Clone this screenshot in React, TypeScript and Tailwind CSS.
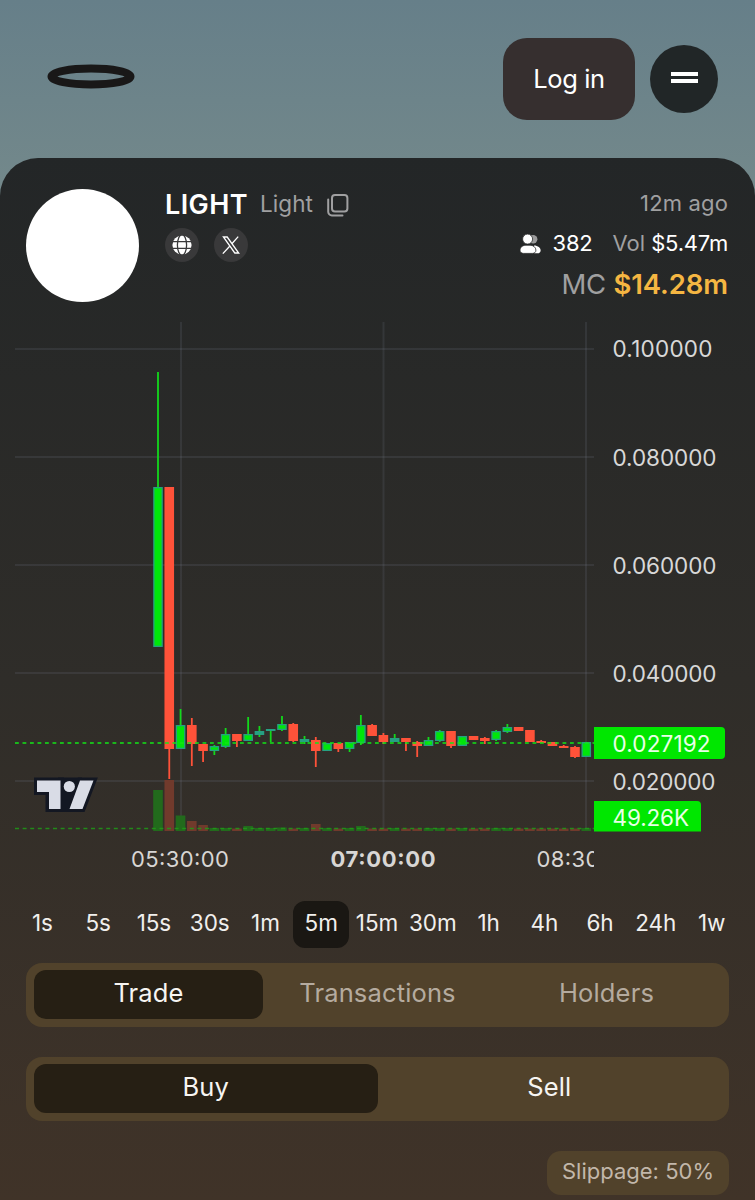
import clsx from 'clsx';
import { useState } from 'react';

type Candle = {
  open: number;
  close: number;
  high: number;
  low: number;
  up: boolean;
  vol: number;
};

// [up, body top, body bottom, wick top, wick bottom, volume height]
const rows: [number, number, number, number, number, number][] = [
  [1, 487, 647, 372, 647, 41],
  [0, 487, 749, 487, 779, 51],
  [1, 725, 749, 709, 749, 15.5],
  [0, 725, 744, 718, 766, 10],
  [0, 744, 751, 744, 762, 6],
  [1, 746, 751, 745, 755, 3],
  [1, 734, 747, 728, 748, 3],
  [0, 734, 741, 734, 747, 2.5],
  [1, 734, 741, 717, 741, 5],
  [1, 731, 735, 726, 737, 3],
  [1, 729, 731, 729, 742, 3],
  [1, 724, 730, 716, 731, 3.5],
  [0, 724, 741, 723, 742, 2.5],
  [1, 739, 742, 736, 744, 3],
  [0, 740, 751, 737, 767, 7],
  [1, 743, 751, 743, 751, 3],
  [0, 743, 749, 743, 752, 2.5],
  [1, 742, 749, 742, 752, 3],
  [1, 725, 743, 715, 745, 5],
  [0, 725, 736, 724, 736, 2.5],
  [0, 735, 742, 733, 744, 2.5],
  [1, 738, 742, 734, 742, 3],
  [0, 738, 742, 738, 751, 2.5],
  [0, 742, 746, 741, 757, 2.5],
  [1, 740, 746, 737, 746, 3],
  [1, 731, 741, 730, 742, 3],
  [0, 731, 746, 731, 748, 2.5],
  [1, 736, 746, 736, 746, 3],
  [0, 736, 740, 736, 740, 2.5],
  [0, 738, 741, 737, 744, 2.5],
  [1, 731, 740, 730, 741, 3],
  [1, 727, 732, 724, 733, 3],
  [0, 727, 731, 727, 731, 2.5],
  [0, 730, 742, 730, 742, 2.5],
  [0, 741, 743, 740, 743, 2.5],
  [0, 742, 746, 742, 746, 2.5],
  [0, 746, 748, 745, 748, 2.5],
  [0, 747, 757, 746, 758, 2.5],
  [1, 742, 757, 742, 757, 3],
];

const candles: Candle[] = rows.map(([up, open, close, high, low, vol]) => ({
  up: up === 1,
  open,
  close,
  high,
  low,
  vol,
}));

const prices = [
  { y: 349, label: '0.100000', width: 100 },
  { y: 457.5, label: '0.080000', width: 104 },
  { y: 565.5, label: '0.060000', width: 104 },
  { y: 673.5, label: '0.040000', width: 104 },
  { y: 781.5, label: '0.020000', width: 103 },
];

const intervals = ['1s', '5s', '15s', '30s', '1m', '5m', '15m', '30m', '1h', '4h', '6h', '24h', '1w'];

function CopyIcon() {
  return (
    <svg width="22" height="24" viewBox="0 0 22 24" fill="none" stroke="#a0a0a1" strokeWidth="2">
      <rect x="5" y="2" width="15.4" height="16.4" rx="3" />
      <path d="M1.2 6.500v12.3a3.7 3.7 0 0 0 3.7 3.7h10.6" strokeLinecap="round" />
    </svg>
  );
}

function GlobeIcon() {
  return (
    <svg width="20" height="20" viewBox="0 0 20 20">
      <circle cx="10" cy="10" r="9.6" fill="#fff" />
      <g fill="none" stroke="#39393a" strokeWidth="1.3">
        <ellipse cx="10" cy="10" rx="4.6" ry="10.4" />
        <path d="M0 6.6h20M0 13.3h20" />
      </g>
    </svg>
  );
}

function XIcon() {
  return (
    <svg width="18" height="18" viewBox="0 0 18 18" fill="none" stroke="#fff" strokeWidth="1.3">
      <path d="M1.4 1h3.8l11.5 16h-3.9z" />
      <path d="M16.2.6 9.9 7.7M7.7 10.2.8 17.6" />
    </svg>
  );
}

function UsersIcon() {
  return (
    <svg width="21" height="20" viewBox="0 0 21 20" className="mt-0.5">
      <circle cx="13.2" cy="5.2" r="4.2" fill="#9b9b9b" />
      <path d="M14 11.4c4 0 6.6 2.400 6.600 5 0 1.900-1.200 2.800-3 2.800h-3.600z" fill="#fff" />
      <circle cx="7.6" cy="5.1" r="5" fill="#fff" stroke="#272828" strokeWidth=".8" />
      <path
        d="M6 11.200h4c3.400 0 5.900 2.200 5.900 4.900 0 2.100-1.300 3.300-3.500 3.300H3.500C1.300 19.400 0 18.200 0 16.100c0-2.700 2.600-4.900 6-4.900z"
        fill="#fff"
        stroke="#272828"
        strokeWidth=".8"
      />
    </svg>
  );
}

function Chart() {
  return (
    <svg width="755" height="599" viewBox="0 302 755 599" className="block" fontFamily="Inter, sans-serif">
      <defs>
        <clipPath id="plot">
          <rect x="0" y="302" width="594" height="599" />
        </clipPath>
      </defs>

      <g fill="#8a90a0" fillOpacity=".14">
        {prices.map((p) => (
          <rect key={p.label} x="15" y={Math.floor(p.y) - 1} width="579" height="2" />
        ))}
        {[180, 382.5, 585].map((x) => (
          <rect key={x} x={x} y="322" width="2" height="509" />
        ))}
      </g>

      {candles.map((c, i) => {
        const x = 158 + i * 11.27;
        return (
          <rect
            key={i}
            x={x - 4.8}
            y={831 - c.vol}
            width="9.6"
            height={c.vol}
            fill={c.up ? '#226a1c' : '#713a2c'}
          />
        );
      })}
      <path d="M15 828.6h579" stroke="#209b18" strokeWidth="1.5" strokeDasharray="4 3.6" opacity=".85" />

      <g strokeLinejoin="miter">
        <path
          d="M37 780.5h24V809H48.500V792H37zM80 780.5h13.5L82.500 809H69.500z"
          fill="#131722"
          stroke="#131722"
          strokeWidth="6"
        />
        <path d="M58 777.5h24V812H58z" fill="#131722" />
        <path d="M37 780.5h23.5V809H49V792H37zM80 780.5h13.5L82.500 809H69.500z" fill="#d9dce6" />
        <circle cx="69.3" cy="786.5" r="5.6" fill="#d9dce6" />
      </g>

      {candles.map((c, i) => {
        const x = 158 + i * 11.27;
        const h = c.close - c.open;
        return (
          <g key={i}>
            <rect x={x - 0.9} y={c.high} width="1.8" height={c.low - c.high} fill={c.up ? '#12d81b' : '#ff5239'} />
            <rect x={x - 4.8} y={c.open} width="9.6" height={h} fill={c.up ? '#26a082' : '#ff5239'} />
            {c.up && h > 4 && <rect x={x - 3.5} y={c.open + 1.3} width="7" height={h - 2.6} fill="#00e60a" />}
          </g>
        );
      })}
      <path d="M15 743h579" stroke="#12e617" strokeWidth="1.7" strokeDasharray="3.8 3.7" />

      <g fill="#d8d8d8" fontSize="22.5">
        {prices.map((p) => (
          <text key={p.label} x="612.5" y={p.y + 8} textLength={p.width}>
            {p.label}
          </text>
        ))}
      </g>

      <path d="M594 727h127a4 4 0 0 1 4 4v24a4 4 0 0 1-4 4H594z" fill="#00e700" />
      <path d="M594 801h103a4 4 0 0 1 4 4v26.500H594z" fill="#00e700" />
      <g fill="#e9ffe6" fontSize="22.5">
        <text x="612.5" y="751.5" textLength="98">
          0.027192
        </text>
        <text x="612.5" y="825.5" textLength="76.5">
          49.26K
        </text>
      </g>

      <g fill="#d8d6d4" fontSize="22" clipPath="url(#plot)">
        <text x="131" y="867" textLength="98">
          05:30:00
        </text>
        <text x="330.5" y="867" textLength="105" fontWeight="700">
          07:00:00
        </text>
        <text x="536.5" y="867" textLength="98">
          08:30:00
        </text>
      </g>
    </svg>
  );
}

type TabsProps = {
  items: string[];
  muted?: boolean;
};

function Tabs({ items, muted }: TabsProps) {
  const [active, setActive] = useState(items[0]);

  return (
    <div className="mx-[26px] flex h-16 rounded-2xl bg-[#51422b] px-2 pt-[7px] pb-2">
      {items.map((item) => (
        <button
          key={item}
          onClick={() => setActive(item)}
          className={clsx(
            'flex-1 rounded-xl pb-[3px] text-[25.5px] leading-none tracking-[0.15px]',
            item === active && 'bg-[#261f14] text-[#f7f5f2]',
            item !== active && (muted ? 'text-[#b5ab9f]' : 'text-[#f7f5f2]')
          )}
        >
          {item}
        </button>
      ))}
    </div>
  );
}

export default function App() {
  const [interval, setInterval] = useState('5m');

  return (
    <div className="h-[1200px] w-[755px] overflow-hidden bg-linear-to-b from-[#667f89] to-[#74898b] to-[200px] font-['Inter',sans-serif]">
      <header className="flex h-[158px] items-start justify-between pt-[38px] pr-[37px] pl-[47px]">
        <svg width="88" height="25" viewBox="0 0 88 25" className="mt-[26px]">
          <ellipse cx="44" cy="12.5" rx="39.5" ry="8" fill="none" stroke="#191818" strokeWidth="8" />
        </svg>
        <div className="flex items-center gap-[15px]">
          <button className="h-[82px] w-[132px] rounded-3xl bg-[#362f2f] text-[25.5px] tracking-[-0.4px] text-white">
            Log in
          </button>
          <button className="flex size-[68px] flex-col items-center justify-center gap-[3px] rounded-full bg-[#212627] pb-[3px]">
            <span className="h-1 w-[27px] bg-white" />
            <span className="h-1 w-[27px] bg-white" />
          </button>
        </div>
      </header>

      <main className="h-[1042px] rounded-t-[38px] bg-linear-to-b from-[#232627] via-[#2f2d29] to-[#403328]">
        <section className="flex h-36 pt-[31px] pr-[27px] pl-[26px]">
          <div className="size-[113px] rounded-full bg-white" />
          <div className="ml-[26px]">
            <div className="flex h-[30px] items-center">
              <h1 className="text-[27px] leading-none font-semibold tracking-[0.4px] text-white">LIGHT</h1>
              <span className="ml-3 text-[22.5px] leading-none tracking-[0.1px] text-[#a0a0a1]">Light</span>
              <span className="mt-px ml-3.5">
                <CopyIcon />
              </span>
            </div>
            <div className="mt-[9px] flex gap-[15px]">
              <span className="flex size-[34px] items-center justify-center rounded-full bg-[#39393a]">
                <GlobeIcon />
              </span>
              <span className="flex size-[34px] items-center justify-center rounded-full bg-[#39393a]">
                <XIcon />
              </span>
            </div>
          </div>
          <div className="ml-auto flex flex-col items-end text-[22px] leading-none">
            <div className="flex h-[27px] items-center tracking-[0.15px] text-[#a0a0a1]">12m ago</div>
            <div className="mt-[13px] flex h-[28px] items-center text-white">
              <UsersIcon />
              <span className="ml-3 tracking-[-0.2px]">382</span>
              <span className="ml-5 text-[#a0a0a1]">Vol</span>
              <span className="ml-1.5 tracking-[-0.2px]">$5.47m</span>
            </div>
            <div className="mt-3 flex h-[32px] items-center text-[27.5px]">
              <span className="tracking-[-0.5px] text-[#a0a0a1]">MC</span>
              <span className="ml-2 font-semibold tracking-[-0.1px] text-[#f5b642]">$14.28m</span>
            </div>
          </div>
        </section>

        <Chart />

        <div className="flex h-[47px] pr-[15.5px] pl-[14.5px] text-[22.5px] text-[#f1efed]">
          {intervals.map((item) => (
            <button
              key={item}
              onClick={() => setInterval(item)}
              className={clsx(
                'flex flex-1 basis-0 items-center justify-center rounded-xl pb-[3px] tracking-[-0.1px] whitespace-nowrap',
                item === interval && 'bg-[#1a1713]'
              )}
            >
              {item}
            </button>
          ))}
        </div>

        <div className="mt-[15px] flex flex-col gap-[30px]">
          <Tabs items={['Trade', 'Transactions', 'Holders']} muted />
          <Tabs items={['Buy', 'Sell']} />
          <div className="mr-[26px] flex h-11 w-[182px] items-center justify-center self-end rounded-[14px] bg-[#51422b] pb-[3px] text-[22px] text-[#c2b7aa]">
            Slippage: 50%
          </div>
        </div>
      </main>
    </div>
  );
}
